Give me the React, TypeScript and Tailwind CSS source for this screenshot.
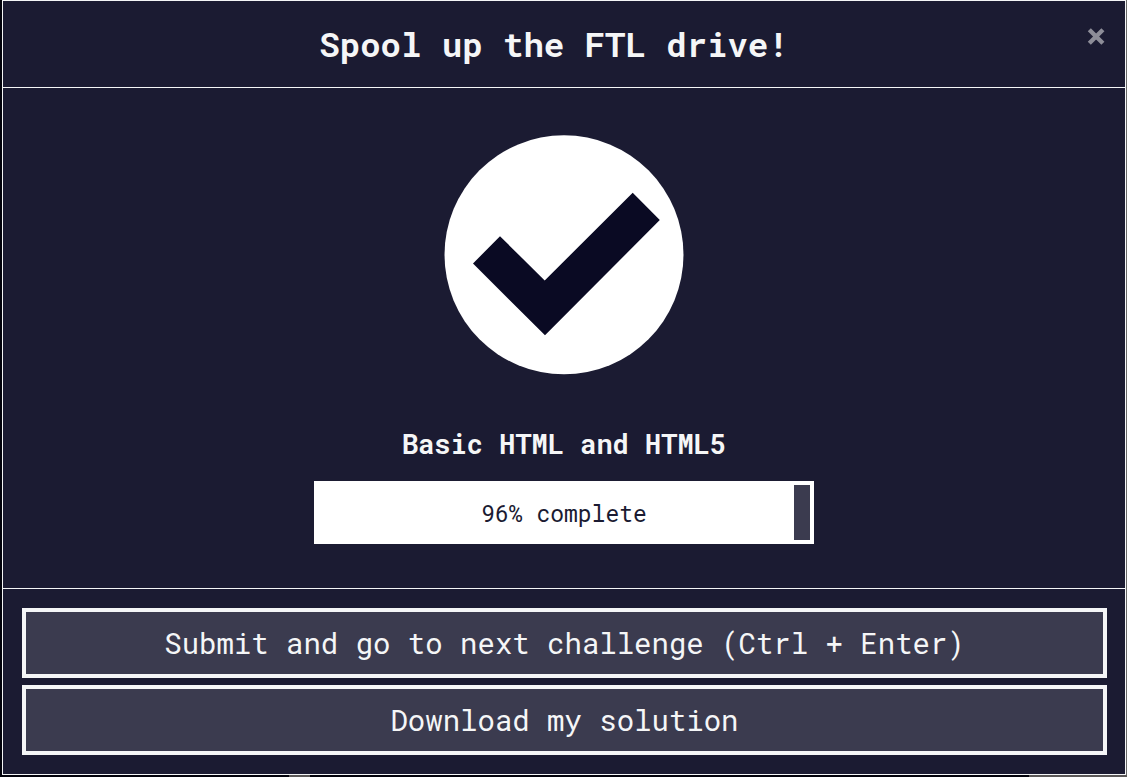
const PERCENT_COMPLETE = 96;

function CheckMark() {
  return (
    <svg className="size-60" viewBox="0 0 240 240" role="img" aria-label="Passed">
      <circle cx="120" cy="119.8" r="119.5" fill="#ffffff" />
      <path d="M29 128.5 56 101.2 100.7 145.5 188.7 57.7 215.8 85 101 200.3Z" fill="#0a0a23" />
    </svg>
  );
}

function Progress({ value }: { value: number }) {
  return (
    <div
      className="relative h-[63px] w-full max-w-[500px] bg-[#3b3b4f]"
      role="progressbar"
      aria-label="Block progress"
      aria-valuenow={value}
      aria-valuemin={0}
      aria-valuemax={100}
    >
      <div className="h-full bg-white" style={{ width: `${value}%` }} />
      <div className="absolute inset-0 flex items-center justify-center border-4 border-white text-[23px] leading-8 text-[#1b1b32]">
        {value}% complete
      </div>
    </div>
  );
}

function ActionButton({ children }: { children: string }) {
  return (
    <button
      type="button"
      className="w-full cursor-pointer border-4 border-[#f5f6f7] bg-[#3b3b4f] px-3 py-[11px] text-[29px] leading-10 text-[#f5f6f7] hover:bg-[#4b4b61]"
    >
      {children}
    </button>
  );
}

export default function App() {
  return (
    <div className="flex min-h-screen flex-col bg-[#02020b] font-['Roboto_Mono','DejaVu_Sans_Mono',monospace]">
      <div className="flex border-r border-[#686868] pl-[2px]">
        <main
          role="dialog"
          aria-labelledby="dialog-title"
          className="min-w-0 flex-1 border border-[#f5f6f7] bg-[#1b1b32] text-[#f5f6f7]"
        >
          <header className="flex items-start border-b border-[#f5f6f7] px-[19px] py-5">
            <h1 id="dialog-title" className="flex-1 text-center text-[34px] leading-[46px] font-bold">
              Spool up the FTL drive!
            </h1>
            <button type="button" aria-label="Close" className="mt-[5px] flex size-5 cursor-pointer items-center justify-center">
              <svg className="size-5" viewBox="0 0 20 20" aria-hidden="true">
                <path d="M3.3 3.8 16.9 17.2M16.9 3.8 3.3 17.2" stroke="#8d8d98" strokeWidth="4.4" />
              </svg>
            </button>
          </header>
          <section className="flex flex-col items-center px-[19px] pt-[47px] pb-11">
            <CheckMark />
            <h2 className="mt-[49px] mb-[17px] text-center text-[27px] leading-10 font-bold">Basic HTML and HTML5</h2>
            <Progress value={PERCENT_COMPLETE} />
          </section>
          <footer className="flex flex-col gap-[7px] border-t border-[#f5f6f7] py-[19px] pr-[18px] pl-[19px]">
            <ActionButton>Submit and go to next challenge (Ctrl + Enter)</ActionButton>
            <ActionButton>Download my solution</ActionButton>
          </footer>
        </main>
      </div>
      <div className="flex flex-1 justify-between pl-[289px]" aria-hidden="true">
        <div className="w-[21px] bg-[#5b5858]" />
        <div className="w-[98px] bg-[#5b5858]" />
      </div>
    </div>
  );
}
